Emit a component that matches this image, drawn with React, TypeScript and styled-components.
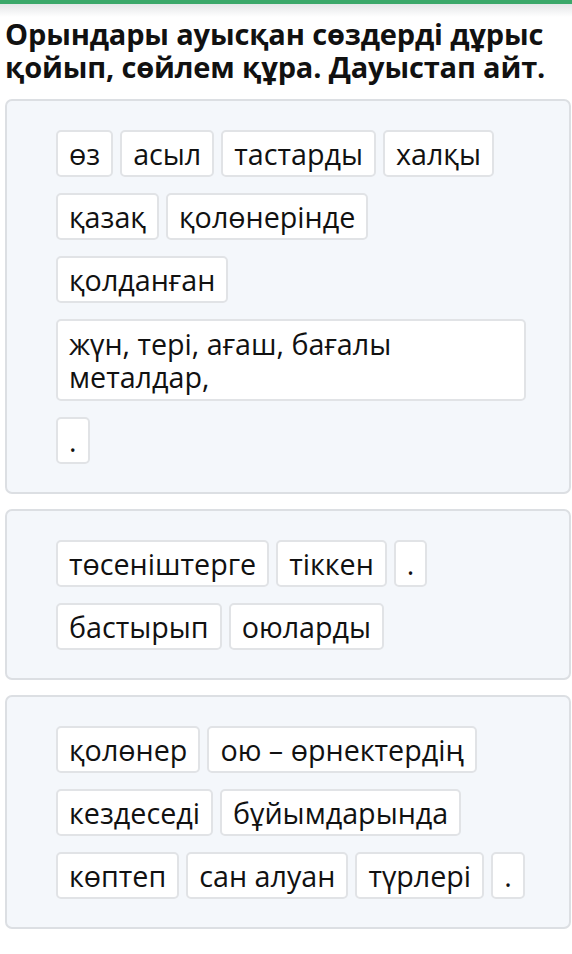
import styled, { createGlobalStyle } from "styled-components";

const Global = createGlobalStyle`
  html, body {
    margin: 0;
    padding: 0;
    background: #ffffff;
  }
  body {
    font-family: "Open Sans", "Noto Sans", "DejaVu Sans", sans-serif;
    color: #111;
  }
`;

const TopBar = styled.div`
  height: 4px;
  background: #3ba86a;
`;

const TopShade = styled.div`
  height: 13px;
  background: linear-gradient(#e4e6e8, #ffffff);
`;

const Page = styled.div`
  padding: 0 1px 0 5px;
`;

const Title = styled.h1`
  margin: 0 0 16px;
  font-size: 29px;
  line-height: 33px;
  font-weight: 700;
  color: #111;
  letter-spacing: -0.15px;
`;

const Card = styled.div`
  background: #f4f7fb;
  border: 2px solid #dcdfe3;
  border-radius: 7px;
  padding: 29px 43px 28px 49px;
  margin-bottom: 15px;
`;

const Chips = styled.div`
  display: flex;
  flex-wrap: wrap;
  gap: 16px 7px;
`;

const Chip = styled.div<{ wide?: boolean }>`
  background: #ffffff;
  border: 2px solid #e1e3e6;
  border-radius: 5px;
  padding: 5px 11px;
  font-size: 28.7px;
  line-height: 33px;
  color: #111;
  ${({ wide }) => (wide ? "flex: 1 1 100%; box-sizing: border-box; padding: 6px 11px;" : "")}
`;

const groups: { text: string; wide?: boolean }[][] = [
  [
    { text: "өз" },
    { text: "асыл" },
    { text: "тастарды" },
    { text: "халқы" },
    { text: "қазақ" },
    { text: "қолөнерінде" },
    { text: "қолданған" },
    { text: "жүн, тері, ағаш, бағалы металдар,", wide: true },
    { text: "." },
  ],
  [
    { text: "төсеніштерге" },
    { text: "тіккен" },
    { text: "." },
    { text: "бастырып" },
    { text: "оюларды" },
  ],
  [
    { text: "қолөнер" },
    { text: "ою – өрнектердің" },
    { text: "кездеседі" },
    { text: "бұйымдарында" },
    { text: "көптеп" },
    { text: "сан алуан" },
    { text: "түрлері" },
    { text: "." },
  ],
];

export default function App() {
  return (
    <>
      <Global />
      <TopBar />
      <TopShade />
      <Page>
        <Title>
          Орындары ауысқан сөздерді дұрыс қойып, сөйлем құра. Дауыстап айт.
        </Title>
        {groups.map((g, i) => (
          <Card key={i}>
            <Chips>
              {g.map((c, j) => (
                <Chip key={j} wide={c.wide}>
                  {c.text}
                </Chip>
              ))}
            </Chips>
          </Card>
        ))}
      </Page>
    </>
  );
}
